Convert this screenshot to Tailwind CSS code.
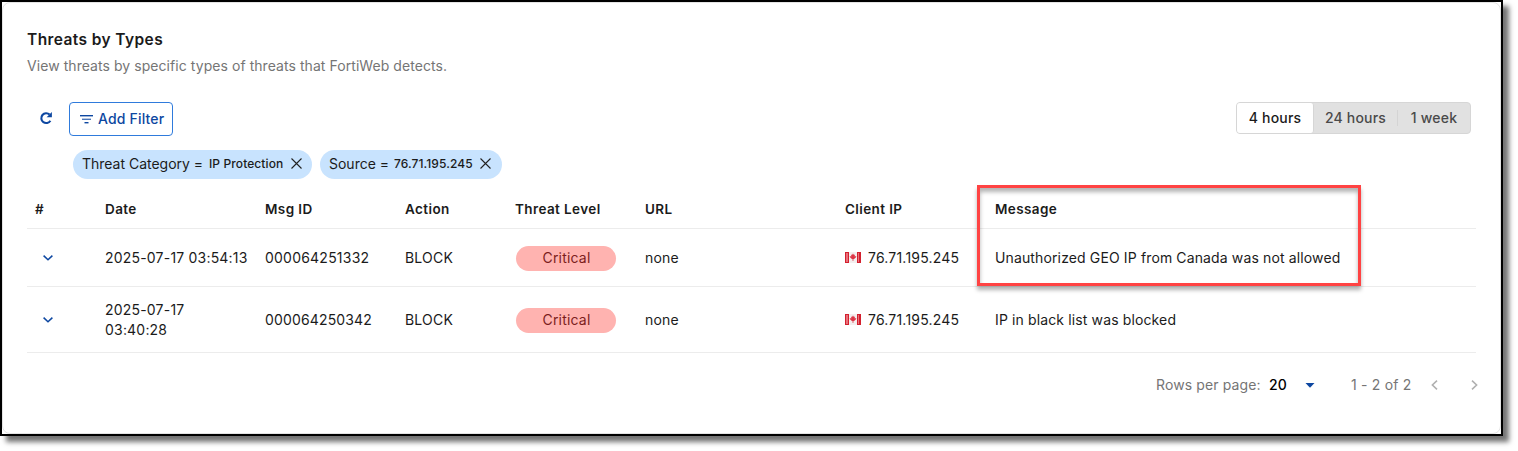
<!DOCTYPE html>
<html lang="en">
<head>
<meta charset="utf-8">
<title>Threats by Types</title>
<script src="https://cdn.jsdelivr.net/npm/@tailwindcss/browser@4"></script>
</head>
<body class="h-[451px] bg-white overflow-hidden font-['Inter',sans-serif] text-[14px] leading-5 tracking-[0.2px] text-[#1b1b1b]">
<main class="relative flex h-[436px] w-[1503px] border-2 border-black bg-white shadow-[6px_6px_5px_rgba(0,0,0,0.55)]">
  <section class="flex w-full flex-col rounded-[8px] border border-[#e4e4e4] pl-6 pr-6">
    <h1 class="mt-[27px] text-[15.5px] leading-5 font-semibold tracking-[0.4px]"><span>Threats by Types</span></h1>
    <p class="mt-[6px] tracking-[0.06px] text-[#757575]"><span>View threats by specific types of threats that FortiWeb detects.</span></p>

    <div class="mt-[26px] flex h-[34px] items-center">
      <svg class="ml-3 h-[14px] w-[14px] -mt-[2px]" viewBox="0 0 14 14" fill="none"><path d="M10.6 3.6A4.9 4.9 0 1 0 11.4 9.7" stroke="#0d47a1" stroke-width="2.1"/><path d="M12.9 .9v5.3H7.6z" fill="#0d47a1"/></svg>
      <button class="ml-[16px] flex h-[34px] w-[104px] items-center rounded-[4px] border border-[#2f7bdc] pl-[10px] font-medium text-[#0d47a1]">
        <svg class="mr-[5px] h-[9px] w-[13px] shrink-0" viewBox="0 0 13 9" fill="#0d47a1"><path d="M0 0h13v1.4H0z"/><path d="M2 3.6h9v1.4H2z" opacity=".75"/><path d="M4.5 7h4v1.4h-4z"/></svg>
        <span class="whitespace-nowrap tracking-[0.17px]">Add Filter</span>
      </button>
      <div class="ml-auto mr-[5px] mt-[-2px] flex h-[32px] w-[235px] rounded-[4px] border border-[#d6d6d6] bg-[#e1e1e1] font-medium text-[#4a4a4a]">
        <div class="flex w-[77px] items-center justify-center rounded-[3px] border-r border-[#d6d6d6] bg-white text-[#1b1b1b]"><span>4 hours</span></div>
        <div class="flex w-[83px] items-center justify-center"><span>24 hours</span></div>
        <div class="my-[7px] w-px bg-[#d4d4d4]"></div>
        <div class="flex flex-1 items-center justify-center"><span>1 week</span></div>
      </div>
    </div>

    <div class="mt-[14px] ml-[46px] flex gap-2">
      <div class="flex h-[29px] w-[239px] items-center rounded-full bg-[#c8e3fe] pb-px pl-[9px] whitespace-nowrap"><span class="w-[127px] tracking-[-0.01px]">Threat Category =</span><span class="w-[82px] text-[12px] font-medium tracking-[0.1px]">IP Protection</span><svg class="-mt-px h-[11px] w-[11px]" viewBox="0 0 11 11" stroke="#222" stroke-width="1.1"><path d="M.5.5l10 10M10.5.5l-10 10"/></svg></div>
      <div class="flex h-[29px] w-[182px] items-center rounded-full bg-[#c8e3fe] pb-px pl-[9px] whitespace-nowrap"><span class="w-[65px] tracking-[-0.01px]">Source =</span><span class="w-[86px] text-[12px] font-medium tracking-[0.1px]">76.71.195.245</span><svg class="-mt-px h-[11px] w-[11px]" viewBox="0 0 11 11" stroke="#222" stroke-width="1.1"><path d="M.5.5l10 10M10.5.5l-10 10"/></svg></div>
    </div>

    <div class="mt-[11px] w-[1449px]">
      <div class="grid h-[39px] grid-cols-[70px_160px_140px_110px_130px_200px_150px_1fr] items-center border-b border-[#ececec] pl-2 text-[13.5px] font-semibold tracking-[0.4px]">
        <span>#</span><span>Date</span><span>Msg ID</span><span>Action</span><span>Threat Level</span><span>URL</span><span>Client IP</span><span>Message</span>
      </div>
      <div class="grid h-[58px] grid-cols-[70px_160px_140px_110px_130px_200px_150px_1fr] items-center border-b border-[#ececec] pl-2 whitespace-nowrap">
        <svg class="ml-2 h-[6px] w-[10px]" viewBox="0 0 10 6" fill="none" stroke="#0d47a1" stroke-width="1.5"><path d="M.6.6L5 4.8 9.4.6"/></svg>
        <span>2025-07-17 03:54:13</span><span class="tracking-[0.22px]">000064251332</span><span>BLOCK</span>
        <div class="mt-px ml-px flex h-[25px] w-[100px] items-center justify-center rounded-full bg-[#ffb3b0] pb-px pl-px text-[#7c1d1d]"><span>Critical</span></div>
        <span>none</span>
        <div class="flex items-center"><svg class="mr-[7px] h-[11px] w-[16px]" viewBox="0 0 16 11"><path fill="#f3eeee" d="M0 0h16v11H0z"/><path fill="#d3202f" d="M0 0h4v11H0zM12 0h4v11h-4z"/><path fill="#e8707a" d="M1 1h2v9H1zM13 1h1v9h-1z"/><path fill="#dc3545" d="M8 1.5l1 1.5.9-.4-.2 1.8 1.6-.5-.3 1.4-1.9 1.6-.7.1.1 1.8h-1l.1-1.8-.7-.1L5 5.3l-.3-1.4 1.6.5-.2-1.8.9.4z"/></svg><span>76.71.195.245</span></div>
        <span class="tracking-[0.13px]">Unauthorized GEO IP from Canada was not allowed</span>
      </div>
      <div class="grid h-[66px] grid-cols-[70px_160px_140px_110px_130px_200px_150px_1fr] items-center border-b border-[#ececec] pl-2 whitespace-nowrap">
        <svg class="ml-2 h-[6px] w-[10px]" viewBox="0 0 10 6" fill="none" stroke="#0d47a1" stroke-width="1.5"><path d="M.6.6L5 4.8 9.4.6"/></svg>
        <span>2025-07-17<br>03:40:28</span><span class="tracking-[0.15px]">000064250342</span><span>BLOCK</span>
        <div class="mt-px ml-px flex h-[25px] w-[100px] items-center justify-center rounded-full bg-[#ffb3b0] pb-px pl-px text-[#7c1d1d]"><span>Critical</span></div>
        <span>none</span>
        <div class="flex items-center"><svg class="mr-[7px] h-[11px] w-[16px]" viewBox="0 0 16 11"><path fill="#f3eeee" d="M0 0h16v11H0z"/><path fill="#d3202f" d="M0 0h4v11H0zM12 0h4v11h-4z"/><path fill="#e8707a" d="M1 1h2v9H1zM13 1h1v9h-1z"/><path fill="#dc3545" d="M8 1.5l1 1.5.9-.4-.2 1.8 1.6-.5-.3 1.4-1.9 1.6-.7.1.1 1.8h-1l.1-1.8-.7-.1L5 5.3l-.3-1.4 1.6.5-.2-1.8.9.4z"/></svg><span>76.71.195.245</span></div>
        <span class="tracking-[0.13px]">IP in black list was blocked</span>
      </div>
    </div>

    <div class="mt-[22px] flex items-center pl-[1129px] whitespace-nowrap text-[#757575]">
      <span class="w-[113px] shrink-0 tracking-[0.12px]">Rows per page:</span>
      <span class="w-[36px] shrink-0 font-medium text-black">20</span>
      <svg class="h-[5px] w-[10px] shrink-0" viewBox="0 0 10 5" fill="#0d47a1"><path d="M.5 0h9L5 4.7z"/></svg>
      <span class="ml-[36px] w-[80px] shrink-0">1 - 2 of 2</span>
      <svg class="h-[10px] w-[7px] shrink-0" viewBox="0 0 7 10" fill="none" stroke="#b0b0b0" stroke-width="1.6"><path d="M6 .7L1.4 5 6 9.3"/></svg>
      <svg class="ml-[33px] h-[10px] w-[7px] shrink-0" viewBox="0 0 7 10" fill="none" stroke="#b0b0b0" stroke-width="1.6"><path d="M1 .7L5.6 5 1 9.3"/></svg>
    </div>
  </section>
  <div class="absolute left-[975px] top-[183px] h-[101px] w-[384px] border-3 border-[#ff4343] shadow-[0_4px_4px_rgba(0,0,0,0.3),inset_0_4px_4px_rgba(0,0,0,0.3)]"></div>
</main>
</body>
</html>
